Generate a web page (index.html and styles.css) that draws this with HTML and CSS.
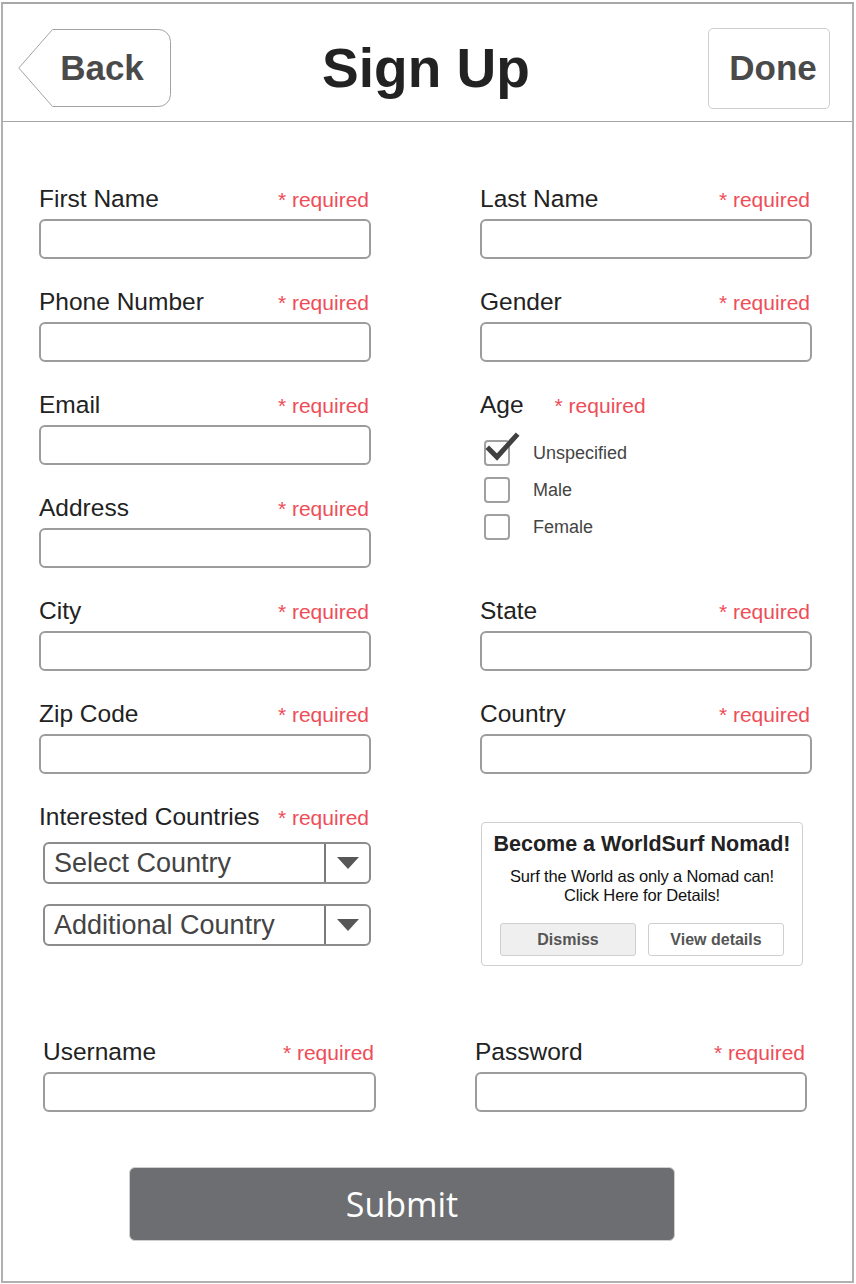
FILE: index.html
```html
<!DOCTYPE html>
<html lang="en">
<head>
<meta charset="utf-8">
<title>Sign Up</title>
<link rel="stylesheet" href="styles.css">
</head>
<body>
<div class="frame">
  <header class="topbar">
    <button class="back-btn">
      <svg class="back-shape" width="154" height="79" viewBox="0 0 154 79"><path d="M34.5,0.5 H140 A12,12 0 0 1 152.5,12.5 V65.5 A12,12 0 0 1 140,77.5 H34.5 L0.8,39 Z" fill="#fff" stroke="#a3a3a3" stroke-width="1"/></svg>
      <span class="back-label">Back</span>
    </button>
    <h1 class="title">Sign Up</h1>
    <button class="done-btn">Done</button>
  </header>

  <main class="form">
    <div class="field">
      <div class="label-row"><span class="label">First Name</span><span class="req">* required</span></div>
      <div class="input"></div>
    </div>
    <div class="field">
      <div class="label-row"><span class="label">Last Name</span><span class="req">* required</span></div>
      <div class="input"></div>
    </div>

    <div class="field">
      <div class="label-row"><span class="label">Phone Number</span><span class="req">* required</span></div>
      <div class="input"></div>
    </div>
    <div class="field">
      <div class="label-row"><span class="label">Gender</span><span class="req">* required</span></div>
      <div class="input"></div>
    </div>

    <div class="field">
      <div class="label-row"><span class="label">Email</span><span class="req">* required</span></div>
      <div class="input"></div>
    </div>
    <div class="field age">
      <div class="label-row tight"><span class="label">Age</span><span class="req">* required</span></div>
      <div class="checks">
        <div class="check-row">
          <span class="box"><svg class="tick" width="36" height="32" viewBox="0 0 36 32"><path d="M4,17 L12,25 L31,4" fill="none" stroke="#404040" stroke-width="5" stroke-linecap="square" stroke-linejoin="miter"/></svg></span>
          <span class="check-text">Unspecified</span>
        </div>
        <div class="check-row"><span class="box"></span><span class="check-text">Male</span></div>
        <div class="check-row"><span class="box"></span><span class="check-text">Female</span></div>
      </div>
    </div>

    <div class="field">
      <div class="label-row"><span class="label">Address</span><span class="req">* required</span></div>
      <div class="input"></div>
    </div>

    <div class="field">
      <div class="label-row"><span class="label">City</span><span class="req">* required</span></div>
      <div class="input"></div>
    </div>
    <div class="field">
      <div class="label-row"><span class="label">State</span><span class="req">* required</span></div>
      <div class="input"></div>
    </div>

    <div class="field">
      <div class="label-row"><span class="label">Zip Code</span><span class="req">* required</span></div>
      <div class="input"></div>
    </div>
    <div class="field">
      <div class="label-row"><span class="label">Country</span><span class="req">* required</span></div>
      <div class="input"></div>
    </div>

    <div class="field">
      <div class="label-row"><span class="label">Interested Countries</span><span class="req">* required</span></div>
      <div class="select first"><span class="select-text">Select Country</span><span class="select-arrow"><span class="tri"></span></span></div>
      <div class="select second"><span class="select-text">Additional Country</span><span class="select-arrow"><span class="tri"></span></span></div>
    </div>
    <div class="field">
      <div class="promo">
        <div class="promo-title">Become a WorldSurf Nomad!</div>
        <div class="promo-body">Surf the World as only a Nomad can!<br>Click Here for Details!</div>
        <div class="promo-actions">
          <button class="pbtn dismiss">Dismiss</button>
          <button class="pbtn">View details</button>
        </div>
      </div>
    </div>

    <div class="field bottom">
      <div class="label-row"><span class="label">Username</span><span class="req">* required</span></div>
      <div class="input"></div>
    </div>
    <div class="field bottom pw">
      <div class="label-row"><span class="label">Password</span><span class="req">* required</span></div>
      <div class="input"></div>
    </div>
  </main>

  <div class="submit-wrap">
    <button class="submit">Submit</button>
  </div>
</div>
</body>
</html>
```

FILE: styles.css
```css
* { box-sizing: border-box; }
html, body { margin: 0; padding: 0; background: #fff; }
body { font-family: "Liberation Sans", Arial, sans-serif; color: #222; }

.frame {
  margin: 2px 0 0 1px;
  width: 853px;
  height: 1281px;
  border: 2px solid #b0b0b0;
  border-top-color: #a8a8a8;
}

.topbar {
  height: 118px;
  border-bottom: 1px solid #a5a5a5;
  padding: 11px 22px 0 15px;
  display: flex;
  align-items: center;
}

button { font-family: inherit; cursor: pointer; }

.back-btn {
  position: relative;
  flex: none;
  width: 154px;
  height: 79px;
  padding: 0 0 0 34px;
  border: none;
  background: transparent;
  display: flex;
  align-items: center;
  justify-content: center;
}
.back-shape { position: absolute; left: 0; top: 0; }
.back-label {
  position: relative;
  font-size: 35px;
  font-weight: 700;
  color: #4a4a4a;
  margin-left: -20px;
}

.title {
  flex: 1;
  margin: 0 28px 0 0;
  text-align: center;
  font-size: 55px;
  font-weight: 700;
  color: #222;
}

.done-btn {
  flex: none;
  width: 122px;
  height: 81px;
  border: 1px solid #cfcfcf;
  border-radius: 5px;
  background: #fff;
  font-size: 35px;
  font-weight: 700;
  color: #4a4a4a;
  padding: 0 0 0 8px;
}

.form {
  padding: 61px 0 0 36px;
  display: grid;
  grid-template-columns: 332px 332px;
  column-gap: 109px;
  row-gap: 27px;
  align-items: start;
}

.field { display: flex; flex-direction: column; }
.age { grid-row: span 2; }

.label-row {
  height: 32px;
  display: flex;
  justify-content: space-between;
  align-items: baseline;
  margin-bottom: 4px;
  line-height: 32px;
}
.label-row.tight { justify-content: flex-start; gap: 31px; }
.label { font-size: 24.5px; color: #222; }
.req { font-size: 21px; color: #ee4d58; padding-right: 2px; }

.input {
  height: 40px;
  border: 2px solid #9c9c9c;
  border-radius: 6px;
  background: #fff;
}

.checks {
  margin-top: 15px;
  padding-left: 4px;
  display: flex;
  flex-direction: column;
  gap: 11px;
}
.check-row { display: flex; align-items: center; height: 26px; }
.box {
  position: relative;
  width: 26px;
  height: 26px;
  border: 2px solid #a0a0a0;
  border-radius: 4px;
  flex: none;
}
.tick { position: absolute; left: -1px; top: -10px; overflow: visible; }
.check-text { margin-left: 23px; font-size: 18px; color: #444; }

.select {
  margin-left: 4px;
  height: 42px;
  border: 2px solid #8c8c8c;
  border-radius: 6px;
  display: flex;
  align-items: stretch;
}
.select.first { margin-top: 5px; }
.select.second { margin-top: 20px; }
.select-text {
  flex: 1;
  font-size: 27px;
  color: #444;
  padding-left: 9px;
  line-height: 38px;
}
.select-arrow {
  width: 45px;
  border-left: 2px solid #7a7a7a;
  display: flex;
  align-items: center;
  justify-content: center;
}
.tri {
  width: 0;
  height: 0;
  border-left: 11px solid transparent;
  border-right: 11px solid transparent;
  border-top: 12px solid #575757;
}

.promo {
  margin-top: 21px;
  margin-left: 1px;
  width: 322px;
  height: 144px;
  border: 1px solid #cfcfcf;
  border-radius: 4px;
  display: flex;
  flex-direction: column;
  align-items: center;
  padding-top: 8px;
}
.promo-title { font-size: 21.5px; font-weight: 700; color: #222; line-height: 26px; }
.promo-body {
  margin-top: 10px;
  font-size: 16.5px;
  line-height: 19px;
  color: #111;
  text-align: center;
  letter-spacing: -0.15px;
}
.promo-actions { margin-top: 18px; display: flex; gap: 12px; }
.pbtn {
  width: 136px;
  height: 33px;
  border: 1px solid #cfcfcf;
  border-radius: 3px;
  background: #fff;
  font-size: 16px;
  font-weight: 700;
  color: #555;
  padding: 0;
}
.pbtn.dismiss { background: #efefef; }

.field.bottom { margin-top: 43px; margin-left: 4px; margin-right: -5px; }
.field.bottom.pw { margin-left: -5px; margin-right: 5px; }

.submit-wrap { padding: 55px 0 0 126px; }
.submit {
  width: 546px;
  height: 74px;
  border: 1px solid #cfcfcf;
  border-radius: 6px;
  background: #6d6e71;
  color: #fff;
  font-family: "Open Sans", sans-serif;
  font-size: 34px;
  font-weight: 400;
  padding: 0;
}
```
